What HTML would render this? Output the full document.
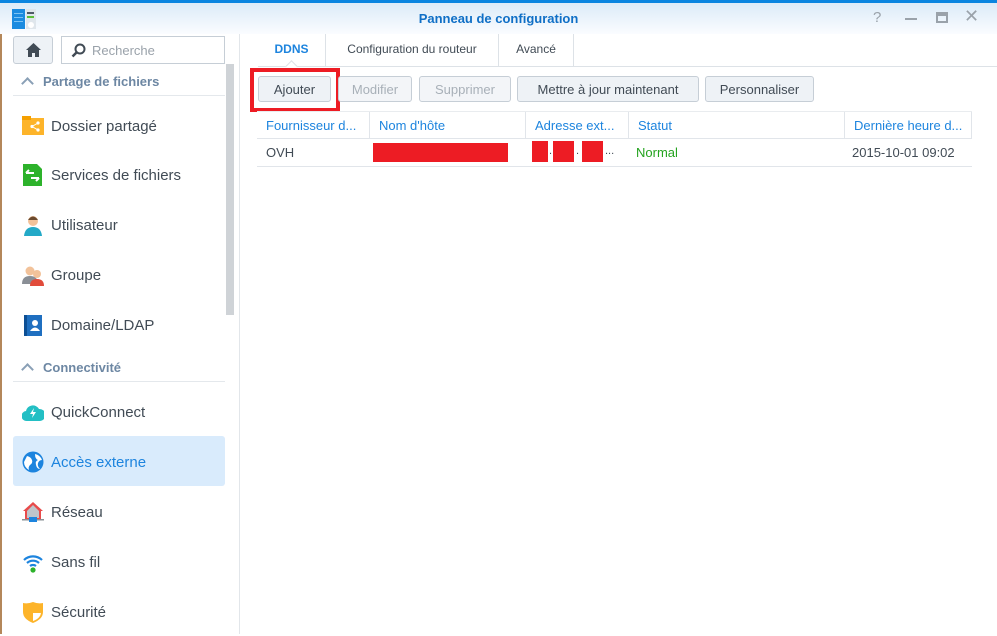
<!DOCTYPE html>
<html><head><meta charset="utf-8"><style>
*{box-sizing:border-box;margin:0;padding:0}
body{width:997px;height:634px;overflow:hidden;background:#fff;font-family:"Liberation Sans",sans-serif;position:relative;color:#414b55}
.abs{position:absolute}
.top{left:0;top:0;width:997px;height:3px;background:#0a85e0}
.title{left:0;top:3px;width:997px;height:31px;background:linear-gradient(#dcebf8,#fafcff)}
.ttxt{left:0;width:997px;top:11px;text-align:center;font-weight:bold;font-size:13px;color:#0f6fc6}
.side{left:0;top:34px;width:240px;height:600px;border-right:1px solid #e2e6ea}
.home{left:13px;top:36px;width:40px;height:28px;border:1px solid #c6ced6;border-radius:3px;background:#eef2f6}
.search{left:61px;top:36px;width:164px;height:28px;border:1px solid #c6ced6;background:#fff;font-size:13px;color:#9aa2aa;padding:6px 0 0 30px}
.sec{left:13px;width:212px;height:30px;border-bottom:1px solid #e4e8ec;font-size:13px;font-weight:bold;color:#6d87a3;padding:8px 0 0 30px}
.sec:before{content:"";position:absolute;left:10px;top:13px;width:7px;height:7px;border-left:2px solid #8aa0b6;border-top:2px solid #8aa0b6;transform:rotate(45deg)}
.it{left:13px;width:212px;height:50px;font-size:15px;color:#414b55;padding:18px 0 0 38px;border-radius:3px}
.it.sel{background:#d9ebfc;color:#1d84de}
.ic{position:absolute;left:9px;top:15px;width:22px;height:22px}
.scroll{left:226px;top:64px;width:8px;height:251px;background:#cfd3d7}
.tabs{left:258px;top:34px;height:33px;width:739px;border-bottom:1px solid #dde2e7}
.tab{position:absolute;top:0;height:32px;font-size:12px;color:#414b55;padding-top:8px;text-align:center;border-right:1px solid #dde2e7}
.btn{position:absolute;top:76px;height:26px;border:1px solid #c6ced6;border-radius:3px;background:#eef2f6;font-size:13px;color:#414b55;text-align:center;padding-top:5px}
.btn.dis{color:#a8b0b8;background:#f3f5f8}
.hdr{left:257px;top:111px;width:715px;height:28px;border-bottom:1px solid #e1e5ea;border-top:1px solid #e9ecef}
.hc{position:absolute;top:0;height:27px;font-size:13px;color:#1d84de;padding:6px 0 0 9px;border-right:1px solid #e1e5ea}
.row{left:257px;top:139px;width:715px;height:28px;border-bottom:1px solid #e1e5ea;font-size:13px}
.red{background:#ed1c24;position:absolute}
</style></head><body>
<div class="abs" style="left:0;top:0;width:2px;height:634px;background:#b4875a"></div>
<div class="abs top"></div>
<div class="abs title"></div>
<svg class="abs" style="left:12px;top:9px" width="25" height="20"><rect width="13" height="20" fill="#1b8be0"/><rect x="2" y="4" width="9" height="1" fill="#7cc3f5"/><rect x="2" y="8" width="9" height="1" fill="#7cc3f5"/><rect x="2" y="12" width="9" height="1" fill="#7cc3f5"/><rect x="14" width="10" height="20" fill="#dfe6ec"/><rect x="15" y="3" width="7" height="2" fill="#4d5a66"/><rect x="15" y="7" width="7" height="2" fill="#5cbf3a"/><circle cx="19" cy="16" r="3" fill="#fff"/></svg>
<div class="abs ttxt">Panneau de configuration</div>
<div class="abs" style="left:873px;top:9px;font-size:15px;color:#9aa2aa">?</div>
<div class="abs" style="left:905px;top:18px;width:12px;height:2px;background:#9aa2aa"></div>
<div class="abs" style="left:936px;top:12px;width:12px;height:11px;border:2px solid #9aa2aa;border-top-width:4px"></div>
<div class="abs" style="left:964px;top:6px;font-size:18px;color:#9aa2aa">✕</div>
<div class="abs side"></div>
<div class="abs home"><svg style="position:absolute;left:11px;top:5px" width="17" height="16"><path d="M8.5 1L1 8h2v7h4v-4h3v4h4V8h2z" fill="#414b55"/></svg></div>
<div class="abs search">Recherche<svg style="position:absolute;left:9px;top:6px" width="15" height="15"><circle cx="9" cy="6" r="4.5" fill="none" stroke="#414b55" stroke-width="2"/><path d="M6 9l-4.5 4.5" stroke="#414b55" stroke-width="2.5"/></svg></div>
<div class="abs scroll"></div>
<div class="abs sec" style="top:66px">Partage de fichiers</div>
<div class="abs it" style="top:100px"><svg class="ic"><rect x="0" y="3" width="22" height="17" fill="#fdb42a"/><rect x="0" y="1" width="9" height="4" fill="#f5a000"/><circle cx="16" cy="8" r="1.6" fill="#fff"/><circle cx="16" cy="15" r="1.6" fill="#fff"/><circle cx="10" cy="11.5" r="1.6" fill="#fff"/><path d="M10 11.5L16 8M10 11.5L16 15" stroke="#fff"/></svg>Dossier partagé</div>
<div class="abs it" style="top:149px"><svg class="ic"><path d="M1 0h14l5 5v17H1z" fill="#2db22b"/><path d="M4 9h8M4 9l3-3M17 14H9m8 0l-3 3" stroke="#fff" stroke-width="2"/></svg>Services de fichiers</div>
<div class="abs it" style="top:199px"><svg class="ic"><circle cx="11" cy="7" r="5" fill="#f2c29a"/><path d="M6 6q5-7 10 0" fill="#6b4a2e"/><path d="M2 22q1-9 9-9t9 9z" fill="#23a9c7"/></svg>Utilisateur</div>
<div class="abs it" style="top:249px"><svg class="ic"><circle cx="8" cy="7" r="4.5" fill="#f2c29a"/><path d="M0 20q0-8 8-8t8 8z" fill="#8a8f96"/><circle cx="15" cy="10" r="4" fill="#f2c29a"/><path d="M8 22q0-7 7-7t7 7z" fill="#e14b3b"/></svg>Groupe</div>
<div class="abs it" style="top:299px"><svg class="ic"><rect x="2" y="1" width="18" height="21" fill="#1f6fc0"/><rect x="2" y="1" width="3" height="21" fill="#0d4f94"/><circle cx="13" cy="9" r="3" fill="#fff"/><path d="M8 17q5-7 10 0z" fill="#fff"/></svg>Domaine/LDAP</div>
<div class="abs sec" style="top:352px">Connectivité</div>
<div class="abs it" style="top:386px"><svg class="ic"><path d="M5 20a5 5 0 0 1-1-10a7 7 0 0 1 13-2a6 6 0 0 1 1 12z" fill="#23bfc4"/><path d="M12 7l-4 6h3l-1 4 4-6h-3z" fill="#fff"/></svg>QuickConnect</div>
<div class="abs it sel" style="top:436px"><svg class="ic"><circle cx="11" cy="11" r="10.5" fill="#1d84de"/><path d="M5 5q4 1 5 4t-2 5q-2 2-1 5q-5-3-5-8zM13 3q5 1 7 6q-3 0-4 3t2 6q-3 0-4-4t2-5q-3-1-3-6z" fill="#fff"/></svg>Accès externe</div>
<div class="abs it" style="top:486px"><svg class="ic"><path d="M11 1L1 10h2v8h16v-8h2z" fill="#e84b4b"/><path d="M11 4L5 10v7h12v-7z" fill="#bfc5cb"/><rect x="0" y="18" width="22" height="1.5" fill="#8a9096"/><rect x="7" y="16" width="8" height="5" fill="#1d84de"/></svg>Réseau</div>
<div class="abs it" style="top:536px"><svg class="ic"><path d="M2 9a13 13 0 0 1 18 0M5 12a9 9 0 0 1 12 0M8 15a5 5 0 0 1 6 0" fill="none" stroke="#1d84de" stroke-width="2.2"/><circle cx="11" cy="19" r="2.6" fill="#2db22b"/></svg>Sans fil</div>
<div class="abs it" style="top:586px"><svg class="ic"><path d="M1 2q5 1 10-1q5 2 10 1v9q0 7-10 11Q1 18 1 11z" fill="#fdb42a"/><path d="M11 3v9h8v-1q0 6-8 9z" fill="#fff"/></svg>Sécurité</div>

<div class="abs tabs"></div>
<div class="tab abs" style="left:258px;width:68px;top:34px;color:#1d84de;font-weight:bold">DDNS</div>
<div class="tab abs" style="left:326px;width:173px;top:34px">Configuration du routeur</div>
<div class="tab abs" style="left:499px;width:75px;top:34px">Avancé</div>
<div class="abs" style="left:287px;top:62px;width:9px;height:9px;background:#fff;border-left:1px solid #dde2e7;border-top:1px solid #dde2e7;transform:rotate(45deg)"></div>
<div class="btn" style="left:258px;width:73px">Ajouter</div>
<div class="abs" style="left:250px;top:68px;width:90px;height:44px;border:4px solid #ed1c24"></div>
<div class="btn dis" style="left:338px;width:74px">Modifier</div>
<div class="btn dis" style="left:419px;width:92px">Supprimer</div>
<div class="btn" style="left:517px;width:182px">Mettre à jour maintenant</div>
<div class="btn" style="left:705px;width:109px">Personnaliser</div>
<div class="abs hdr">
<div class="hc" style="left:0;width:113px">Fournisseur d...</div>
<div class="hc" style="left:113px;width:156px">Nom d'hôte</div>
<div class="hc" style="left:269px;width:103px">Adresse ext...</div>
<div class="hc" style="left:372px;width:216px">Statut</div>
<div class="hc" style="left:588px;width:127px">Dernière heure d...</div>
</div>
<div class="abs row">
<div class="abs" style="left:9px;top:6px">OVH</div>
<div class="red" style="left:116px;top:4px;width:135px;height:19px"></div>
<div class="red" style="left:275px;top:2px;width:16px;height:21px"></div>
<div class="red" style="left:296px;top:2px;width:21px;height:21px"></div>
<div class="red" style="left:325px;top:2px;width:21px;height:21px"></div>
<div class="abs" style="left:292px;top:6px;font-size:11px">.</div><div class="abs" style="left:319px;top:6px;font-size:11px">.</div>
<div class="abs" style="left:348px;top:6px;font-size:11px">...</div>
<div class="abs" style="left:379px;top:6px;color:#24a31f">Normal</div>
<div class="abs" style="left:595px;top:6px">2015-10-01 09:02</div>
</div>
</body></html>
